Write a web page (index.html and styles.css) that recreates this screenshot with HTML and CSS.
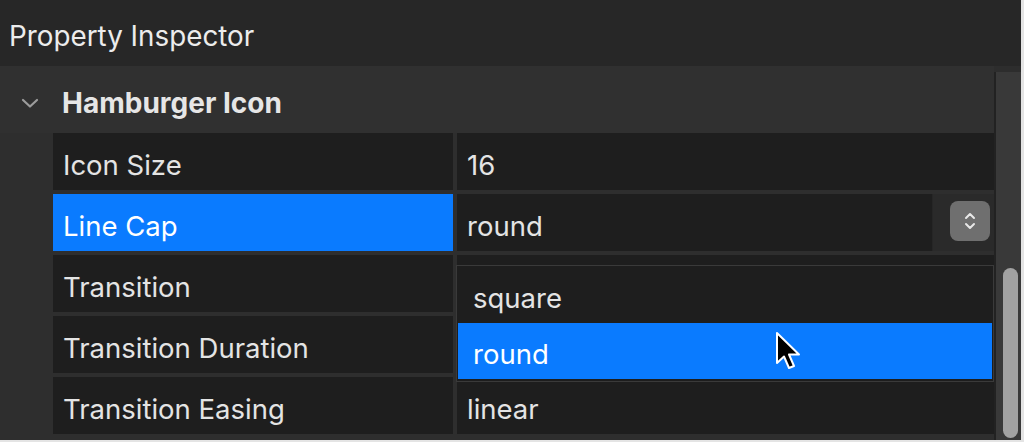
FILE: index.html
```html
<!DOCTYPE html>
<html>
<head>
<meta charset="utf-8">
<link rel="stylesheet" href="styles.css">
</head>
<body>
<div class="app">
  <div class="titlebar">Property Inspector</div>
  <div class="main">
    <div class="content">
      <div class="section-head">
        <svg class="chev" width="18" height="12" viewBox="0 0 18 12"><path d="M2 3 L9 9.5 L16 3" fill="none" stroke="#9c9c9c" stroke-width="2.2" stroke-linecap="round" stroke-linejoin="round"/></svg>
        <span class="section-title">Hamburger Icon</span>
      </div>
      <div class="table">
        <div class="cell label">Icon Size</div>
        <div class="cell value">16</div>
        <div class="cell label selected">Line Cap</div>
        <div class="cell value select-cell">
          <div class="field">round</div>
          <div class="stepper">
            <svg width="14" height="22" viewBox="0 0 14 22"><path d="M3 8 L7 4 L11 8" fill="none" stroke="#e8e8e8" stroke-width="2" stroke-linecap="round" stroke-linejoin="round"/><path d="M3 14 L7 18 L11 14" fill="none" stroke="#e8e8e8" stroke-width="2" stroke-linecap="round" stroke-linejoin="round"/></svg>
          </div>
        </div>
        <div class="cell label">Transition</div>
        <div class="cell value"></div>
        <div class="cell label">Transition Duration</div>
        <div class="cell value"></div>
        <div class="cell label">Transition Easing</div>
        <div class="cell value">linear</div>
      </div>
      <div class="popup">
        <div class="opt">square</div>
        <div class="opt active">round</div>
      </div>
      <svg class="cursor" width="30" height="42" viewBox="0 0 30 42"><path d="M2 2 L2 32 L9 25.5 L14 37 L19 35 L14 23.5 L24 23.5 Z" fill="#000" stroke="#fff" stroke-width="2" stroke-linejoin="round"/></svg>
    </div>
    <div class="scrollbar"><div class="thumb"></div></div>
  </div>
</div>
</body>
</html>
```
FILE: styles.css
```css
* { box-sizing: border-box; }
html, body { margin: 0; padding: 0; }
body {
  width: 1024px;
  height: 442px;
  overflow: hidden;
  background: #e4e4e4;
  font-family: "Inter", "Roboto", sans-serif;
  color: #e4e4e4;
}
.app {
  width: 1021px;
  height: 440px;
  display: flex;
  flex-direction: column;
  background: #2d2d2d;
}
.titlebar {
  height: 66px;
  flex: none;
  background: #272727;
  font-size: 27.8px;
  padding: 0 0 0 9px;
  display: flex;
  align-items: center;
  padding-top: 6px;
  color: #ececec;
}
.main {
  flex: 1;
  display: flex;
  min-height: 0;
}
.content {
  flex: 1;
  position: relative;
  background: #2e2e2e;
}
.section-head {
  height: 67px;
  display: flex;
  align-items: center;
  padding-left: 21px;
  background: #303030;
  padding-top: 6px;
}
.chev { margin-right: 23px; }
.section-title {
  font-weight: 700;
  font-size: 28px;
  color: #e6e6e6;
}
.table {
  margin-left: 53px;
  display: grid;
  grid-template-columns: 400px 1fr;
  grid-auto-rows: 57px;
  column-gap: 4px;
  row-gap: 4px;
}
.cell {
  background: #1e1e1e;
  font-size: 27.5px;
  display: flex;
  align-items: center;
  padding-top: 6px;
  color: #e4e4e4;
}
.label { padding-left: 10px; }
.value { padding-left: 10px; }
.selected { background: #0a7bff; color: #fff; }
.select-cell {
  background: #2a2a2a;
  padding: 0;
  align-items: stretch;
}
.field {
  width: 476px;
  background: #1e1e1e;
  display: flex;
  align-items: center;
  padding-left: 10px;
  padding-top: 6px;
  border-right: 1px solid #262626;
}
.stepper {
  margin: 7px 0 0 17px;
  width: 40px;
  height: 40px;
  border-radius: 8px;
  background: #6f6f6f;
  display: flex;
  align-items: center;
  justify-content: center;
}
.popup {
  position: absolute;
  left: 456px;
  top: 199px;
  width: 538px;
  height: 117px;
  background: #1e1e1e;
  border: 1px solid #3a3a3a;
  padding: 1px;
  display: flex;
  flex-direction: column;
}
.opt {
  height: 56px;
  font-size: 27.5px;
  display: flex;
  align-items: center;
  padding-left: 15px;
  padding-top: 6px;
  color: #e4e4e4;
}
.opt.active { background: #0a7bff; color: #fff; }
.cursor {
  position: absolute;
  left: 775px;
  top: 265px;
}
.scrollbar {
  width: 27px;
  flex: none;
  background: #393939;
  border-left: 2px solid #222;
  margin-top: 6px;
  position: relative;
}
.thumb {
  position: absolute;
  left: 7px;
  top: 196px;
  width: 15px;
  height: 170px;
  border-radius: 8px;
  background: #a2a2a2;
}
```
